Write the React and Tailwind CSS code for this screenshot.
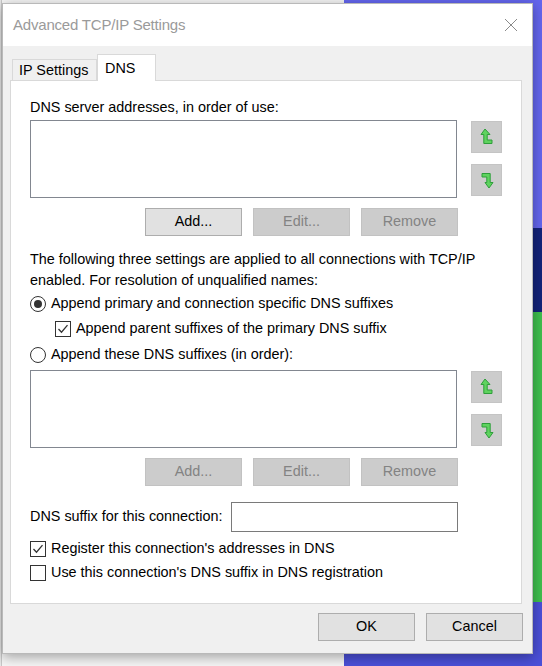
import React from 'react'

const FONT = { fontFamily: '"Liberation Sans", Arial, sans-serif' }

function ArrowUp() {
  return (
    <svg width="14" height="18" viewBox="0 0 14 18">
      <path d="M5 1 L10 6.5 L7.2 6.5 L7.2 12 L12 12 L12 15.5 L3.8 15.5 L3.8 6.5 L1 6.5 Z" fill="#5fd35f" stroke="#2e9e3a" strokeWidth="1" strokeLinejoin="round" />
    </svg>
  )
}

function ArrowDown() {
  return (
    <svg width="14" height="18" viewBox="0 0 14 18">
      <path d="M2 2.5 L10.2 2.5 L10.2 11.5 L13 11.5 L9 17 L5 11.5 L6.8 11.5 L6.8 6 L2 6 Z" fill="#5fd35f" stroke="#2e9e3a" strokeWidth="1" strokeLinejoin="round" />
    </svg>
  )
}

function ListWithArrows() {
  return (
    <div className="flex items-start gap-[14px]">
      <div className="w-[428px] h-[78px] bg-white border border-[#828790]" />
      <div className="flex flex-col gap-[11px] pt-px">
        <div className="w-[31px] h-[32px] bg-[#cccccc] border border-[#c4c4c4] flex items-center justify-center"><ArrowUp /></div>
        <div className="w-[31px] h-[32px] bg-[#cccccc] border border-[#c4c4c4] flex items-center justify-center"><ArrowDown /></div>
      </div>
    </div>
  )
}

function Btn({ children, disabled, className = '' }) {
  return (
    <div
      className={`w-[97px] h-[28px] flex items-center justify-center border ${
        disabled ? 'bg-[#cccccc] border-[#c2c2c2] text-[#838383]' : 'bg-[#e1e1e1] border-[#adadad] text-black'
      } ${className}`}
    >
      {children}
    </div>
  )
}

function ButtonRow({ disabled }) {
  return (
    <div className="flex justify-end gap-[11px] w-[428px] mt-[10px]">
      <Btn disabled={disabled}>Add...</Btn>
      <Btn disabled>Edit...</Btn>
      <Btn disabled>Remove</Btn>
    </div>
  )
}

function Radio({ checked, label }) {
  return (
    <div className="flex items-center gap-[5px] h-[25px]">
      <div className="w-[16px] h-[16px] rounded-full border border-[#333] bg-white flex items-center justify-center">
        {checked && <div className="w-[8px] h-[8px] rounded-full bg-[#333]" />}
      </div>
      <span>{label}</span>
    </div>
  )
}

function Check({ checked, label, className = '' }) {
  return (
    <div className={`flex items-center gap-[5px] h-[24px] ${className}`}>
      <div className="w-[16px] h-[16px] border border-[#333] bg-white flex items-center justify-center">
        {checked && (
          <svg width="12" height="12" viewBox="0 0 12 12">
            <path d="M1.5 6 L4.5 9.2 L10.5 2.2" fill="none" stroke="#333" strokeWidth="1.3" />
          </svg>
        )}
      </div>
      <span>{label}</span>
    </div>
  )
}

export default function App() {
  return (
    <div className="relative w-[542px] h-[666px] overflow-hidden bg-[#f6f6f6]" style={FONT}>
      {/* desktop behind the dialog */}
      <div className="absolute left-[344px] top-0 right-0 bottom-0 flex flex-col">
        <div className="h-[228px] bg-[#6466ee]" />
        <div className="h-[84px] bg-[#13237a]" />
        <div className="h-[290px] bg-[#3fc04f]" />
        <div className="flex-1 bg-[#4b50d8]" />
      </div>
      <div className="absolute left-0 top-0 w-[2px] h-full bg-[#e8e8e8] border-r border-[#c8c8c8]" />

      {/* dialog window */}
      <div className="absolute left-[2px] top-[3px] w-[531px] h-[651px] bg-[#f0f0f0] border border-[#b9b9b9] shadow-[0_3px_12px_rgba(0,0,0,0.35)] flex flex-col">
        <div className="h-[42px] bg-white flex items-center justify-between pl-[10px] pr-[14px] shrink-0">
          <span className="text-[15px] tracking-[-0.2px] text-[#9a9a9a]">Advanced TCP/IP Settings</span>
          <svg width="14" height="14" viewBox="0 0 14 14">
            <path d="M1 1 L13 13 M13 1 L1 13" stroke="#8a8a8a" strokeWidth="1" />
          </svg>
        </div>

        <div className="flex-1 flex flex-col px-[7px] pt-[8px] text-[14.4px] text-black">
          {/* tabs */}
          <div className="flex items-end h-[26px] pl-[2px]">
            <div className="w-[85px] h-[22px] pl-[6px] flex items-center bg-[#f0f0f0] border border-b-0 border-[#d9d9d9] mb-[-1px]">IP Settings</div>
            <div className="relative z-10 w-[59px] h-[27px] pl-[7px] flex items-start pt-[3px] bg-white border border-b-0 border-[#d9d9d9] mb-[-1px]">DNS</div>
          </div>

          {/* tab panel */}
          <div className="w-[512px] h-[524px] bg-white border border-[#d9d9d9] px-[19px] pt-[16px]">
            <div className="h-[20px] leading-[20px]">DNS server addresses, in order of use:</div>
            <div className="mt-[3px]">
              <ListWithArrows />
            </div>
            <ButtonRow />

            <div className="mt-[13px] leading-[21px]">
              <div>The following three settings are applied to all connections with TCP/IP</div>
              <div>enabled. For resolution of unqualified names:</div>
            </div>
            <div>
              <Radio checked label="Append primary and connection specific DNS suffixes" />
              <Check checked label="Append parent suffixes of the primary DNS suffix" className="pl-[25px] h-[26px]" />
              <Radio label="Append these DNS suffixes (in order):" />
            </div>
            <div className="mt-[3px]">
              <ListWithArrows />
            </div>
            <ButtonRow disabled />

            <div className="flex items-center mt-[16px]">
              <span className="w-[201px]">DNS suffix for this connection:</span>
              <div className="w-[227px] h-[30px] border border-[#7a7a7a] bg-white" />
            </div>
            <div className="mt-[5px]">
              <Check checked label="Register this connection's addresses in DNS" />
              <Check label="Use this connection's DNS suffix in DNS registration" />
            </div>
          </div>

          {/* dialog buttons */}
          <div className="flex justify-end gap-[11px] mt-[9px] pr-[2px]">
            <Btn>OK</Btn>
            <Btn>Cancel</Btn>
          </div>
        </div>
      </div>
    </div>
  )
}
